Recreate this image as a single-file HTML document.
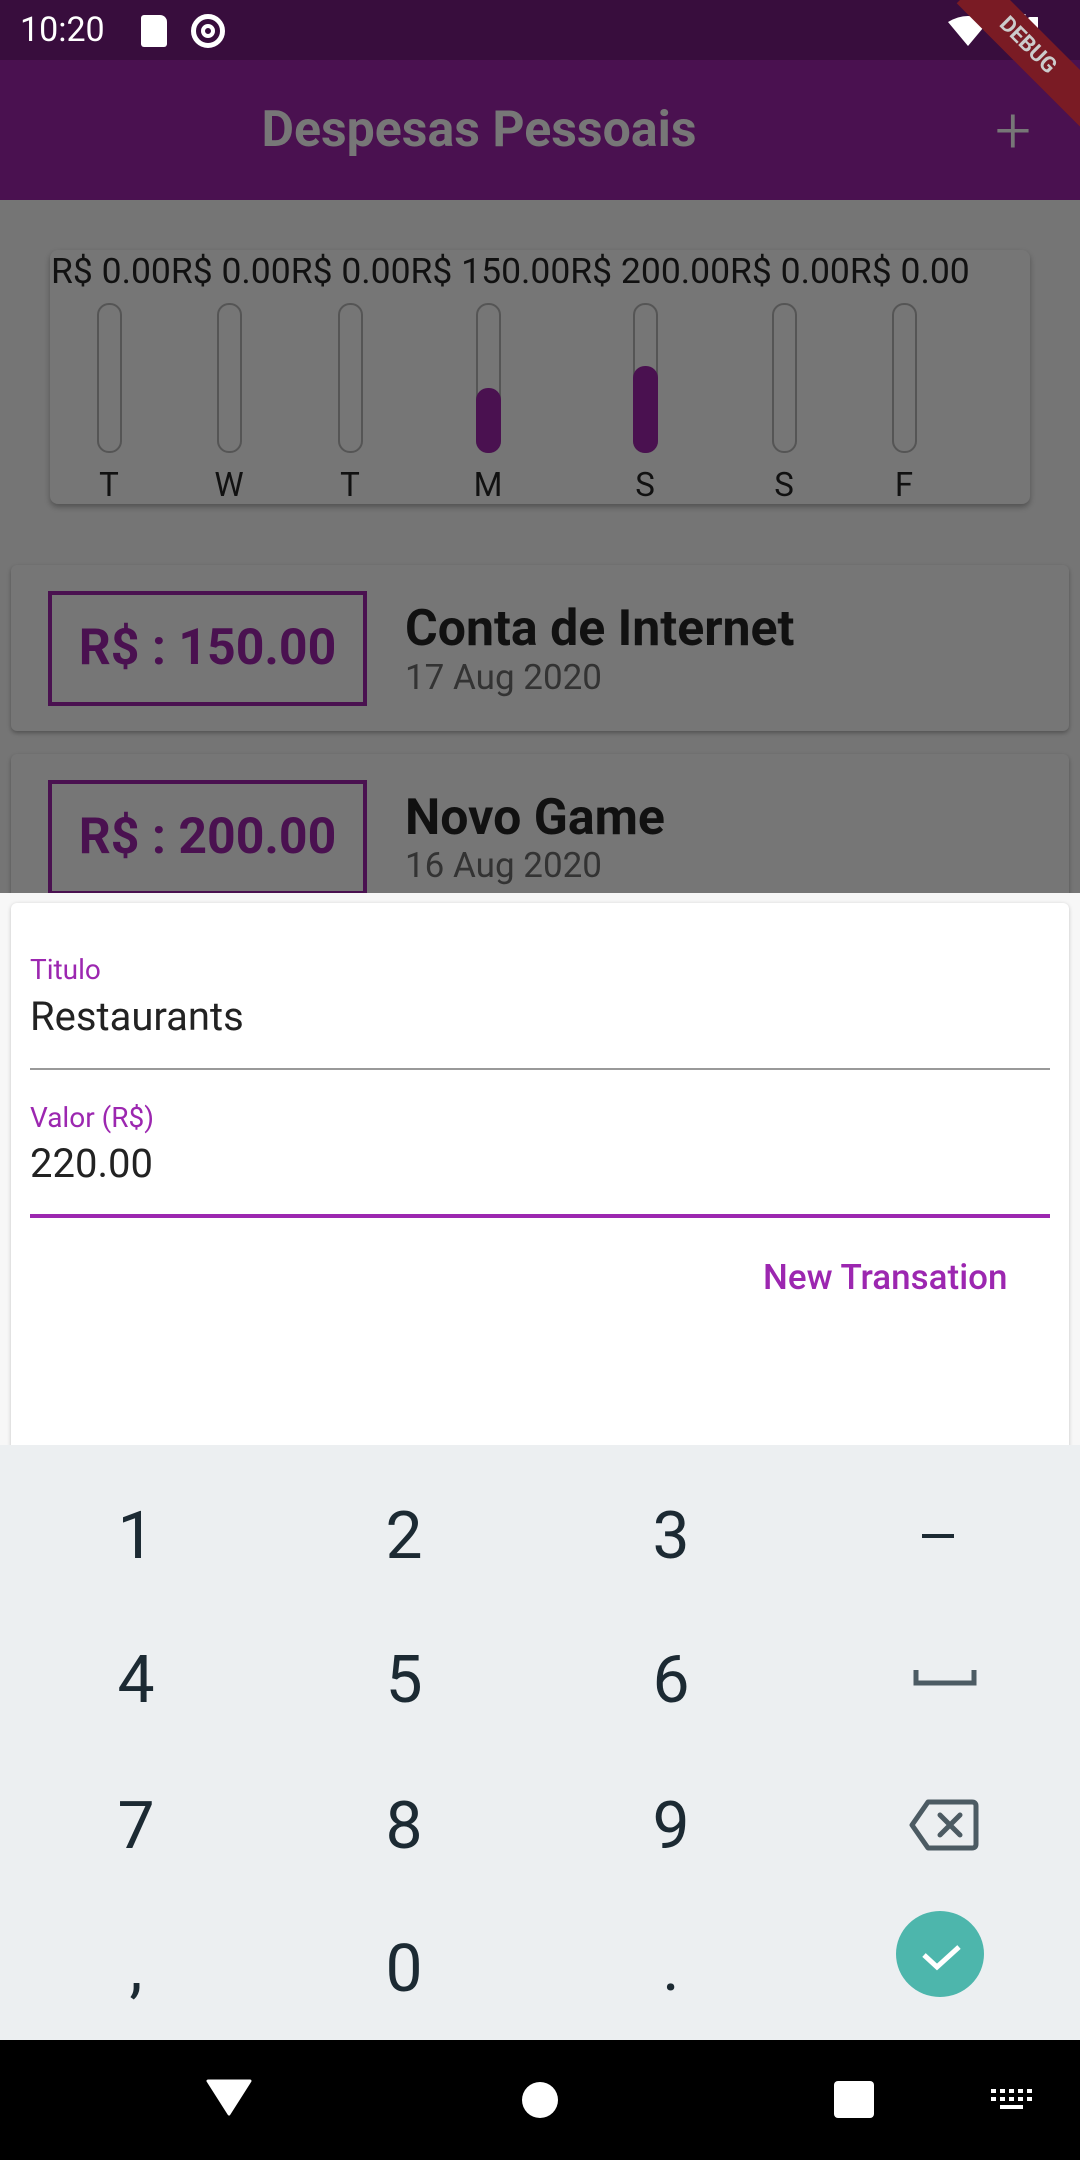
<!DOCTYPE html>
<html><head><meta charset="utf-8"><style>
*{margin:0;padding:0;box-sizing:border-box}
body{width:1080px;height:2160px;background:#757575;position:relative;overflow:hidden;font-family:"Roboto","Liberation Sans",sans-serif}
.a{position:absolute}
.t{position:absolute;white-space:nowrap}
</style></head><body>
<div class="a" style="left:0;top:0;width:1080px;height:60px;background:#380d3d"></div>
<div class="t" style="left:20px;top:10px;font-size:34px;color:#fff">10:20</div>
<div class="a" style="left:141px;top:15px;width:26px;height:32px;background:#fff;border-radius:3px 7px 3px 3px"></div>
<div class="a" style="left:191px;top:14px;width:34px;height:34px;border:5px solid #fff;border-radius:50%"></div>
<div class="a" style="left:201px;top:24px;width:14px;height:14px;border:4px solid #fff;border-radius:50%"></div>
<svg class="a" style="left:948px;top:14px" width="90" height="34"><path d="M0 8 Q20 -4 40 8 L20 32Z" fill="#fff"/><path d="M60 32 L76 4 L76 32Z" fill="none" stroke="#fff" stroke-width="3"/><rect x="80" y="3" width="11" height="30" rx="2" fill="#fff"/></svg>
<div class="a" style="left:0;top:60px;width:1080px;height:140px;background:#4a1150"></div>
<div class="t" style="left:0;width:958px;text-align:center;top:101px;font-size:50px;font-weight:bold;color:#777">Despesas Pessoais</div>
<div class="t" style="left:995px;top:93px;font-size:64px;color:#777;font-weight:300">+</div>
<div class="a" style="left:985px;top:-25px;width:200px;height:40px;background:#7a1b24;transform:rotate(45deg);transform-origin:0 0;"><div style="color:#ccc;font-weight:bold;font-size:22px;text-align:center;line-height:40px;width:160px">DEBUG</div></div>
<div class="a" style="left:50px;top:250px;width:980px;height:254px;background:#767676;border-radius:8px;box-shadow:0 3px 6px rgba(0,0,0,.3)"></div>
<div class="t" style="left:51px;top:250px;font-size:35.5px;color:#111">R$ 0.00R$ 0.00R$ 0.00R$ 150.00R$ 200.00R$ 0.00R$ 0.00</div>
<div class="a" style="left:97px;top:303px;width:25px;height:150px;border:2px solid #555;border-radius:12px"></div>
<div class="a" style="left:217px;top:303px;width:25px;height:150px;border:2px solid #555;border-radius:12px"></div>
<div class="a" style="left:338px;top:303px;width:25px;height:150px;border:2px solid #555;border-radius:12px"></div>
<div class="a" style="left:476px;top:303px;width:25px;height:150px;border:2px solid #555;border-radius:12px"></div>
<div class="a" style="left:476px;top:388px;width:25px;height:65px;background:#4a1150;border-radius:12px"></div>
<div class="a" style="left:633px;top:303px;width:25px;height:150px;border:2px solid #555;border-radius:12px"></div>
<div class="a" style="left:633px;top:366px;width:25px;height:87px;background:#4a1150;border-radius:12px"></div>
<div class="a" style="left:772px;top:303px;width:25px;height:150px;border:2px solid #555;border-radius:12px"></div>
<div class="a" style="left:892px;top:303px;width:25px;height:150px;border:2px solid #555;border-radius:12px"></div>
<div class="t" style="top:466px;left:89px;width:40px;text-align:center;font-size:33px;color:#111">T</div>
<div class="t" style="top:466px;left:209px;width:40px;text-align:center;font-size:33px;color:#111">W</div>
<div class="t" style="top:466px;left:330px;width:40px;text-align:center;font-size:33px;color:#111">T</div>
<div class="t" style="top:466px;left:468px;width:40px;text-align:center;font-size:33px;color:#111">M</div>
<div class="t" style="top:466px;left:625px;width:40px;text-align:center;font-size:33px;color:#111">S</div>
<div class="t" style="top:466px;left:764px;width:40px;text-align:center;font-size:33px;color:#111">S</div>
<div class="t" style="top:466px;left:884px;width:40px;text-align:center;font-size:33px;color:#111">F</div>

<div class="a" style="left:11px;top:565px;width:1058px;height:166px;background:#767676;border-radius:6px;box-shadow:0 2px 4px rgba(0,0,0,.3)"></div>
<div class="a" style="left:48px;top:591px;width:319px;height:115px;border:4px solid #4a1150"></div>
<div class="t" style="left:48px;width:319px;text-align:center;top:619px;font-size:50px;font-weight:bold;color:#4a1150">R$ : 150.00</div>
<div class="t" style="left:405px;top:600px;font-size:50px;font-weight:bold;color:#111">Conta de Internet</div>
<div class="t" style="left:405px;top:657px;font-size:35px;color:#333">17 Aug 2020</div>
<div class="a" style="left:11px;top:754px;width:1058px;height:166px;background:#767676;border-radius:6px;box-shadow:0 2px 4px rgba(0,0,0,.3)"></div>
<div class="a" style="left:48px;top:780px;width:319px;height:115px;border:4px solid #4a1150"></div>
<div class="t" style="left:48px;width:319px;text-align:center;top:808px;font-size:50px;font-weight:bold;color:#4a1150">R$ : 200.00</div>
<div class="t" style="left:405px;top:789px;font-size:50px;font-weight:bold;color:#111">Novo Game</div>
<div class="t" style="left:405px;top:845px;font-size:35px;color:#333">16 Aug 2020</div>

<div class="a" style="left:0;top:893px;width:1080px;height:1147px;background:#f7f7f7"></div>
<div class="a" style="left:11px;top:903px;width:1058px;height:1200px;background:#fff;border-radius:6px;box-shadow:0 1px 4px rgba(0,0,0,.2)"></div>
<div class="t" style="left:30px;top:953px;font-size:28px;color:#9c27b0">Titulo</div>
<div class="t" style="left:30px;top:993px;font-size:40px;color:#222">Restaurants</div>
<div class="a" style="left:30px;top:1068px;width:1020px;height:2px;background:#999"></div>
<div class="t" style="left:30px;top:1101px;font-size:28px;color:#9c27b0">Valor (R$)</div>
<div class="t" style="left:30px;top:1140px;font-size:40px;color:#222">220.00</div>
<div class="a" style="left:30px;top:1214px;width:1020px;height:4px;background:#9c27b0"></div>
<div class="t" style="left:763px;top:1257px;font-size:35px;font-weight:500;color:#9c27b0">New Transation</div>

<div class="a" style="left:0;top:1445px;width:1080px;height:595px;background:#eceff1"></div>
<div class="t" style="left:86px;width:100px;text-align:center;top:1498px;font-size:66px;color:#1c2a33">1</div>
<div class="t" style="left:354px;width:100px;text-align:center;top:1498px;font-size:66px;color:#1c2a33">2</div>
<div class="t" style="left:621px;width:100px;text-align:center;top:1498px;font-size:66px;color:#1c2a33">3</div>
<div class="a" style="left:922px;top:1534px;width:32px;height:4px;background:#1c2a33"></div>
<div class="t" style="left:86px;width:100px;text-align:center;top:1642px;font-size:66px;color:#1c2a33">4</div>
<div class="t" style="left:354px;width:100px;text-align:center;top:1642px;font-size:66px;color:#1c2a33">5</div>
<div class="t" style="left:621px;width:100px;text-align:center;top:1642px;font-size:66px;color:#1c2a33">6</div>
<svg class="a" style="left:911px;top:1668px" width="70" height="22"><path d="M5 2 V15 H63 V2" fill="none" stroke="#4c5b63" stroke-width="5"/></svg>
<div class="t" style="left:86px;width:100px;text-align:center;top:1788px;font-size:66px;color:#1c2a33">7</div>
<div class="t" style="left:354px;width:100px;text-align:center;top:1788px;font-size:66px;color:#1c2a33">8</div>
<div class="t" style="left:621px;width:100px;text-align:center;top:1788px;font-size:66px;color:#1c2a33">9</div>
<svg class="a" style="left:903px;top:1795px" width="80" height="60"><path d="M25 7 H69 Q73 7 73 11 V49 Q73 53 69 53 H25 L9 30Z" fill="none" stroke="#4c5b63" stroke-width="5" stroke-linejoin="round"/><path d="M37 20 L57 40 M57 20 L37 40" stroke="#4c5b63" stroke-width="5" stroke-linecap="round"/></svg>
<div class="t" style="left:86px;width:100px;text-align:center;top:1930px;font-size:66px;color:#1c2a33">,</div>
<div class="t" style="left:354px;width:100px;text-align:center;top:1931px;font-size:66px;color:#1c2a33">0</div>
<div class="t" style="left:621px;width:100px;text-align:center;top:1930px;font-size:66px;color:#1c2a33">.</div>
<div class="a" style="left:896px;top:1911px;width:88px;height:86px;border-radius:50%;background:#4db6ac"></div>
<svg class="a" style="left:896px;top:1911px" width="88" height="86"><path d="M28 44 L41 56 L63 36" fill="none" stroke="#fff" stroke-width="5"/></svg>

<div class="a" style="left:0;top:2040px;width:1080px;height:120px;background:#000"></div>
<svg class="a" style="left:206px;top:2078px" width="46" height="40"><path d="M2 3 H44 L23 36Z" fill="#fff" stroke="#fff" stroke-width="3" stroke-linejoin="round"/></svg>
<div class="a" style="left:522px;top:2082px;width:36px;height:36px;border-radius:50%;background:#fff"></div>
<div class="a" style="left:834px;top:2081px;width:40px;height:37px;border-radius:4px;background:#fff"></div>
<svg class="a" style="left:990px;top:2088px" width="44" height="26"><g fill="#fff"><rect x="1" y="1" width="5" height="4"/><rect x="10" y="1" width="5" height="4"/><rect x="19" y="1" width="5" height="4"/><rect x="28" y="1" width="5" height="4"/><rect x="37" y="1" width="5" height="4"/><rect x="1" y="9" width="5" height="4"/><rect x="10" y="9" width="5" height="4"/><rect x="19" y="9" width="5" height="4"/><rect x="28" y="9" width="5" height="4"/><rect x="37" y="9" width="5" height="4"/><rect x="10" y="17" width="23" height="4"/></g></svg>
</body></html>
